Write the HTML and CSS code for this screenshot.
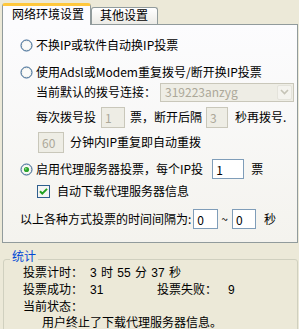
FILE: index.html
```html
<!DOCTYPE html>
<html>
<head>
<meta charset="UTF-8">
<title>网络环境设置</title>
<link rel="stylesheet" href="styles.css">
</head>
<body>

<div class="tabs">
	<div class="tab active">网络环境设置</div>
	<div class="tab">其他设置</div>
</div>

<div class="panel">
	<div class="row opt r1">
		<svg class="radio" width="13" height="13" viewBox="0 0 13 13"><circle cx="6.5" cy="6.5" r="5.5" fill="#F1F1EC" stroke="#2F5F8E"/><circle cx="6.5" cy="6.5" r="3.8" fill="#FBFBF9"/></svg>
		<span>不换IP或软件自动换IP投票</span>
	</div>

	<div class="row opt r2">
		<svg class="radio" width="13" height="13" viewBox="0 0 13 13"><circle cx="6.5" cy="6.5" r="5.5" fill="#F1F1EC" stroke="#2F5F8E"/><circle cx="6.5" cy="6.5" r="3.8" fill="#FBFBF9"/></svg>
		<span>使用Adsl或Modem重复拨号/断开换IP投票</span>
	</div>

	<div class="row sub r3">
		<span>当前默认的拨号连接：</span>
		<div class="combo">
			<span class="combo-text">319223anzyg</span>
			<span class="arrow"><svg width="9" height="6" viewBox="0 0 9 6"><path d="M1 1 L4.5 4.5 L8 1" fill="none" stroke="#C5C3B6" stroke-width="1.6"/></svg></span>
		</div>
	</div>

	<div class="row sub r4">
		<span>每次拨号投</span>
		<input type="text" class="box off w-once" value="1" disabled>
		<span>票，断开后隔</span>
		<input type="text" class="box off w-gap" value="3" disabled>
		<span class="after">秒再拨号.</span>
	</div>

	<div class="row sub r5">
		<input type="text" class="box off w-min" value="60" disabled>
		<span>分钟内IP重复即自动重拨</span>
	</div>

	<div class="row opt r6">
		<svg class="radio" width="13" height="13" viewBox="0 0 13 13"><circle cx="6.5" cy="6.5" r="5.5" fill="#F1F1EC" stroke="#2F5F8E"/><circle cx="6.5" cy="6.5" r="3.8" fill="#FBFBF9"/><circle cx="6.5" cy="6.5" r="2.6" fill="#2DA52D"/><circle cx="5.8" cy="5.8" r="0.9" fill="#8EE08E"/></svg>
		<span>启用代理服务器投票，每个IP投</span>
		<input type="text" class="box w-proxy" value="1">
		<span class="after">票</span>
	</div>

	<div class="row chk r7">
		<svg class="check" width="13" height="13" viewBox="0 0 13 13"><rect x="0.5" y="0.5" width="12" height="12" fill="#F6F6F3" stroke="#2F5F8E"/><path d="M3 6.2 L5.3 8.6 L10 3.9" fill="none" stroke="#21A121" stroke-width="2"/></svg>
		<span>自动下载代理服务器信息</span>
	</div>

	<div class="row opt r8">
		<span>以上各种方式投票的时间间隔为:</span>
		<input type="text" class="box w-from" value="0">
		<span class="tilde">~</span>
		<input type="text" class="box w-to" value="0">
		<span class="after">秒</span>
	</div>
</div>

<div class="stats">
	<div class="stats-title">统计</div>
	<div class="stat-body">
		<div><span class="lbl">投票计时：</span><span class="num">3 时 55 分 37 秒</span></div>
		<div><span class="lbl">投票成功：</span><span class="num val">31</span><span class="lbl2">投票失败：</span><span class="num">9</span></div>
		<div>当前状态：</div>
		<div class="msg">用户终止了下载代理服务器信息。</div>
	</div>
</div>

</body>
</html>
```

FILE: styles.css
```css
html, body {
	overflow: hidden;
}

body {
	margin: 0;
	background: #ECE9D8;
	font-family: "Noto Sans CJK SC", sans-serif;
	font-size: 12px;
	line-height: 12px;
	color: #000;
}

/* tabs */
.tabs {
	display: flex;
	align-items: flex-end;
	height: 21px;
	margin: 0 1px 0 2px;
	padding-top: 3px;
	border-bottom: 1px solid #919B9C;
}

.tab {
	box-sizing: border-box;
	width: 67px;
	height: 17px;
	padding: 1px 0 0 8px;
	border: 1px solid #919B9C;
	border-bottom: none;
	border-radius: 3px 3px 0 0;
	background: linear-gradient(#FFFFFF, #ECEBE6);
}

.tab.active {
	width: 89px;
	height: 22px;
	margin-bottom: -1px;
	padding: 2px 0 0 9px;
	border-top: 3px solid #FFC83C;
	background: #FCFCFE;
}

/* panel */
.panel {
	margin: 0 1px 0 2px;
	padding: 10px 0 13px 0;
	border: 1px solid #919B9C;
	border-top: none;
	background: linear-gradient(#FCFCFE, #F4F3EE);
}

.row {
	display: flex;
	align-items: center;
	height: 20px;
	white-space: nowrap;
}

.opt { padding-left: 17px; }
.sub { padding-left: 33px; }
.chk { padding-left: 34px; }

.r2 { margin-top: 7px; }
.r4 { margin-top: 5px; }
.r5 { margin-top: 5px; }
.r6 { margin-top: 7px; }
.r7 { margin-top: 2px; }
.r8 { margin-top: 8px; }

.radio {
	margin-right: 3px;
	flex: none;
}

.check {
	margin-right: 7px;
	flex: none;
}

/* text boxes */
.box {
	box-sizing: border-box;
	height: 20px;
	margin: 0;
	padding: 0 3px;
	border: 1px solid #7F9DB9;
	background: #fff;
	font-family: "Noto Sans CJK SC", sans-serif;
	font-size: 12px;
	color: #000;
	outline: none;
}

.box.off {
	border-color: #C9C7BA;
	background: #EEEDE5;
	color: #ACA899;
}

.w-once { width: 24px; margin: 0 5px; height: 21px; }
.w-gap { width: 22px; margin-left: 4px; height: 21px; }
.w-min { width: 26px; margin: 0 6px 0 2px; height: 21px; }
.w-proxy { width: 32px; margin-left: 9px; }
.w-from { width: 25px; margin-left: 2px; }
.w-to { width: 24px; margin-left: 4px; }

.after { margin-left: 7px; }
.r8 .after { margin-left: 8px; }
.tilde { margin-left: 3px; }

/* combo */
.combo {
	box-sizing: border-box;
	display: flex;
	align-items: center;
	width: 134px;
	height: 19px;
	margin-left: 4px;
	padding-left: 4px;
	border: 1px solid #C9C7BA;
	background: #EEEDE5;
	color: #ACA899;
}

.combo-text {
	flex: 1;
}

.arrow {
	box-sizing: border-box;
	display: flex;
	align-items: center;
	justify-content: center;
	width: 15px;
	height: 15px;
	margin-right: 1px;
	border: 1px solid #E4E3DB;
	border-radius: 2px;
	background: #F4F3EE;
}

/* stats group */
.stats {
	height: 100px;
	margin: 16px 1px 0 3px;
	border: 1px solid #D0D0BF;
	border-radius: 3px;
}

.stats-title {
	width: fit-content;
	margin: -10px 0 0 6px;
	padding: 0 2px;
	background: #ECE9D8;
	color: #0046D5;
}

.stat-body {
	padding: 2px 0 0 19px;
	line-height: 16px;
	white-space: nowrap;
}

.lbl {
	display: inline-block;
	width: 67px;
}

.lbl2 {
	display: inline-block;
	width: 71px;
}

.num {
	font-family: "Liberation Sans", "Noto Sans CJK SC", sans-serif;
	word-spacing: 1px;
}

.val {
	display: inline-block;
	width: 67px;
}

.msg {
	padding-left: 19px;
}
```
